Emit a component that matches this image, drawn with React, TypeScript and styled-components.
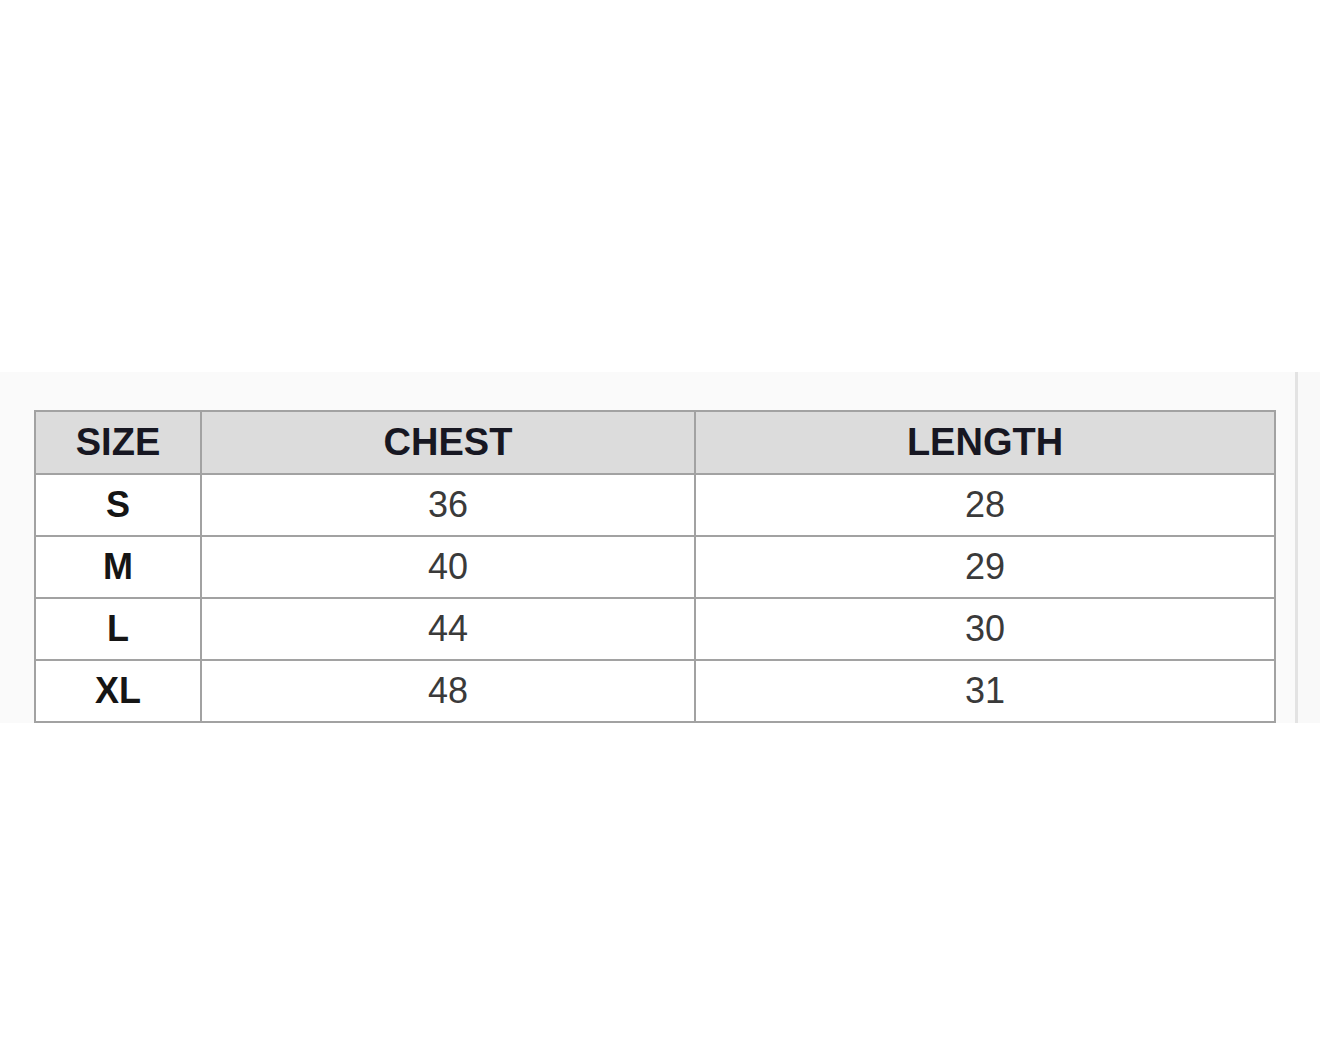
import styled, { createGlobalStyle } from 'styled-components'

const GlobalStyle = createGlobalStyle`
  html, body {
    margin: 0;
    padding: 0;
    background: #ffffff;
  }
  body {
    font-family: "Liberation Sans", Arial, sans-serif;
  }
`

const rows = [
  { size: 'S', chest: 36, length: 28 },
  { size: 'M', chest: 40, length: 29 },
  { size: 'L', chest: 44, length: 30 },
  { size: 'XL', chest: 48, length: 31 },
]

export default function App() {
  return (
    <Page>
      <GlobalStyle />
      <Strip>
        <ChartArea>
          <SizeTable>
            <colgroup>
              <col style={{ width: 166 }} />
              <col style={{ width: 494 }} />
              <col style={{ width: 580 }} />
            </colgroup>
            <thead>
              <HeadRow>
                <HeadCell>SIZE</HeadCell>
                <HeadCell>CHEST</HeadCell>
                <HeadCell>LENGTH</HeadCell>
              </HeadRow>
            </thead>
            <tbody>
              {rows.map((r) => (
                <BodyRow key={r.size}>
                  <Cell $bold>{r.size}</Cell>
                  <Cell>{r.chest}</Cell>
                  <Cell>{r.length}</Cell>
                </BodyRow>
              ))}
            </tbody>
          </SizeTable>
        </ChartArea>
        <Divider />
        <Gutter />
      </Strip>
    </Page>
  )
}

const Page = styled.div`
  width: 1320px;
  height: 1046px;
  padding-top: 372px;
  box-sizing: border-box;
  background: #ffffff;
`

const Strip = styled.div`
  display: flex;
  height: 351px;
  background: #fafafa;
`

const ChartArea = styled.div`
  width: 1295px;
  padding: 38px 0 0 34px;
  box-sizing: border-box;
`

const Divider = styled.div`
  width: 3px;
  background: #e3e3e3;
`

const Gutter = styled.div`
  flex: 1;
  background: #f9f9f9;
`

const SizeTable = styled.table`
  border-collapse: collapse;
  table-layout: fixed;
  width: 1241px;
  border: 2px solid #a2a2a2;
`

const HeadRow = styled.tr`
  height: 63px;
  background: #dcdcdc;
`

const BodyRow = styled.tr`
  height: 62px;
  background: #ffffff;
`

const HeadCell = styled.th`
  border: 2px solid #a2a2a2;
  padding: 0;
  font-size: 38px;
  font-weight: 700;
  color: #171722;
  text-align: center;
  vertical-align: middle;
`

const Cell = styled.td<{ $bold?: boolean }>`
  border: 2px solid #a2a2a2;
  padding: 0;
  font-size: 36px;
  font-weight: ${(p) => (p.$bold ? 700 : 400)};
  color: ${(p) => (p.$bold ? '#151515' : '#3a3a3a')};
  text-align: center;
  vertical-align: middle;
`
